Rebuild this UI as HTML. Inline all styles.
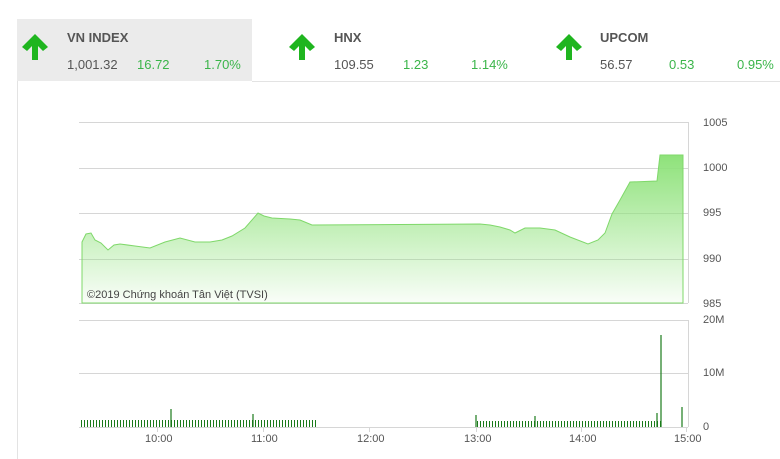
<!DOCTYPE html>
<html><head><meta charset="utf-8"><style>
body{margin:0;width:780px;height:459px;background:#fff;font-family:"Liberation Sans",sans-serif;position:relative;overflow:hidden}
.box{position:absolute;top:19px;height:62px}
.t{position:absolute;font-weight:bold;font-size:13px;color:#555;top:30px}
.v{position:absolute;font-size:13px;color:#555;top:57px}
.g{color:#3bb54a}
.ax{position:absolute;font-size:11px;color:#555}
</style></head><body>
<div class="box" style="left:17px;width:235px;background:#ebebeb"></div>
<div style="position:absolute;left:252px;top:81px;width:528px;height:1px;background:#e3e3e3"></div>
<div style="position:absolute;left:17px;top:81px;width:1px;height:378px;background:#e3e3e3"></div>
<svg style="position:absolute;left:0;top:0" width="780" height="100">
<g fill="#1fb51f">
<path d="M35 34 L22 47 L27 51 L32 46 L32 60 L38 60 L38 46 L43 51 L48 47 Z"/>
<path d="M302 34 L289 47 L294 51 L299 46 L299 60 L305 60 L305 46 L310 51 L315 47 Z"/>
<path d="M569 34 L556 47 L561 51 L566 46 L566 60 L572 60 L572 46 L577 51 L582 47 Z"/>
</g></svg>
<div class="t" style="left:67px">VN INDEX</div>
<div class="v" style="left:67px">1,001.32</div><div class="v g" style="left:137px">16.72</div><div class="v g" style="left:204px">1.70%</div>
<div class="t" style="left:334px">HNX</div>
<div class="v" style="left:334px">109.55</div><div class="v g" style="left:403px">1.23</div><div class="v g" style="left:471px">1.14%</div>
<div class="t" style="left:600px">UPCOM</div>
<div class="v" style="left:600px">56.57</div><div class="v g" style="left:669px">0.53</div><div class="v g" style="left:737px">0.95%</div>

<svg style="position:absolute;left:0;top:0" width="780" height="459">
<defs>
<linearGradient id="gr" x1="0" y1="0" x2="0" y2="1"><stop offset="0" stop-color="#8ee27a"/><stop offset="1" stop-color="#8ee27a" stop-opacity="0.05"/></linearGradient>
<pattern id="vb" width="3" height="10" patternUnits="userSpaceOnUse"><rect x="0" y="0" width="1" height="10" fill="#1a7a1a"/></pattern>
</defs>
<g stroke="#d6d6d6" stroke-width="1">
<line x1="79" y1="122.5" x2="688" y2="122.5"/><line x1="79" y1="168.5" x2="688" y2="168.5"/><line x1="79" y1="213.5" x2="688" y2="213.5"/><line x1="79" y1="259.5" x2="688" y2="259.5"/><line x1="79" y1="303.5" x2="688" y2="303.5"/>
<line x1="688.5" y1="122" x2="688.5" y2="303"/>
<line x1="79" y1="320.5" x2="688" y2="320.5"/><line x1="79" y1="373.5" x2="688" y2="373.5"/><line x1="79" y1="427.5" x2="688" y2="427.5"/>
<line x1="688.5" y1="320" x2="688.5" y2="427"/>
<line x1="157.5" y1="427" x2="157.5" y2="432"/><line x1="263.5" y1="427" x2="263.5" y2="432"/><line x1="369.5" y1="427" x2="369.5" y2="432"/><line x1="476.5" y1="427" x2="476.5" y2="432"/><line x1="581.5" y1="427" x2="581.5" y2="432"/><line x1="686.5" y1="427" x2="686.5" y2="432"/>
</g>
<path d="M82 242 L86 234 L91 233 L95 240 L101 243 L108 250 L114 245 L120 244 L135 246 L150 248 L165 242 L180 238 L195 242 L210 242 L222 240 L232 236 L245 228 L258 213 L264 216 L272 218 L290 219 L300 220 L312 225 L480 224 L490 225 L500 227 L510 230 L515 233 L525 228 L540 228 L555 230 L570 237 L588 244 L598 240 L605 233 L612 214 L620 200 L630 182 L657 181 L660 155 L683 155 L683 303 L82 303 Z" fill="url(#gr)" stroke="#7fd86a" stroke-width="1"/>
<rect x="80" y="420" width="238" height="7" fill="url(#vb)"/>
<rect x="476" y="421" width="185" height="6" fill="url(#vb)"/>
<g stroke="#1a7a1a" stroke-width="1.2">
<line x1="171" y1="409" x2="171" y2="427"/><line x1="253" y1="414" x2="253" y2="427"/><line x1="476" y1="415" x2="476" y2="427"/><line x1="535" y1="416" x2="535" y2="427"/><line x1="661" y1="335" x2="661" y2="427"/><line x1="682" y1="407" x2="682" y2="427"/><line x1="657" y1="413" x2="657" y2="427"/>
</g>
</svg>
<div class="ax" style="left:87px;top:289px;font-size:11px;color:#444">©2019 Chứng khoán Tân Việt (TVSI)</div>
<div class="ax" style="left:703px;top:117px">1005</div>
<div class="ax" style="left:703px;top:162px">1000</div>
<div class="ax" style="left:703px;top:207px">995</div>
<div class="ax" style="left:703px;top:253px">990</div>
<div class="ax" style="left:703px;top:298px">985</div>
<div class="ax" style="left:703px;top:314px">20M</div>
<div class="ax" style="left:703px;top:367px">10M</div>
<div class="ax" style="left:703px;top:421px">0</div>
<div class="ax" style="left:145px;top:433px">10:00</div>
<div class="ax" style="left:251px;top:433px">11:00</div>
<div class="ax" style="left:357px;top:433px">12:00</div>
<div class="ax" style="left:464px;top:433px">13:00</div>
<div class="ax" style="left:569px;top:433px">14:00</div>
<div class="ax" style="left:674px;top:433px">15:00</div>
</body></html>
